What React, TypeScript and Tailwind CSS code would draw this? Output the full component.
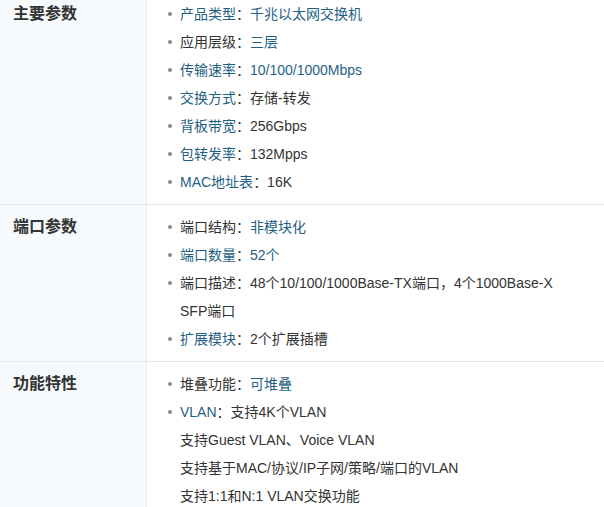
import React from "react";

type Seg = { text: string; link?: boolean };
type Line = { bullet?: boolean; segs: Seg[] };
type Group = { title: string; lines: Line[] };

const L = (text: string): Seg => ({ text, link: true });
const T = (text: string): Seg => ({ text });

const groups: Group[] = [
  {
    title: "主要参数",
    lines: [
      { bullet: true, segs: [L("产品类型"), T("："), L("千兆以太网交换机")] },
      { bullet: true, segs: [T("应用层级："), L("三层")] },
      { bullet: true, segs: [L("传输速率"), T("："), L("10/100/1000Mbps")] },
      { bullet: true, segs: [L("交换方式"), T("：存储-转发")] },
      { bullet: true, segs: [L("背板带宽"), T("：256Gbps")] },
      { bullet: true, segs: [L("包转发率"), T("：132Mpps")] },
      { bullet: true, segs: [L("MAC地址表"), T("：16K")] },
    ],
  },
  {
    title: "端口参数",
    lines: [
      { bullet: true, segs: [T("端口结构："), L("非模块化")] },
      { bullet: true, segs: [L("端口数量"), T("："), L("52个")] },
      { bullet: true, segs: [T("端口描述：48个10/100/1000Base-TX端口，4个1000Base-X")] },
      { segs: [T("SFP端口")] },
      { bullet: true, segs: [L("扩展模块"), T("：2个扩展插槽")] },
    ],
  },
  {
    title: "功能特性",
    lines: [
      { bullet: true, segs: [T("堆叠功能："), L("可堆叠")] },
      { bullet: true, segs: [L("VLAN"), T("：支持4K个VLAN")] },
      { segs: [T("支持Guest VLAN、Voice VLAN")] },
      { segs: [T("支持基于MAC/协议/IP子网/策略/端口的VLAN")] },
      { segs: [T("支持1:1和N:1 VLAN交换功能")] },
    ],
  },
];

/**
 * ONE PARAMETER ROW
 */
function ParamRow({ group }: { group: Group }) {
  return (
    <section className="flex border-b border-[#e6e6e6]">
      <div className="w-[147px] shrink-0 bg-[#f6fafd] border-r border-[#e8eef2] pl-[13px] pt-[8px]">
        <h3 className="text-[16px] leading-[28px] font-bold text-[#333]">{group.title}</h3>
      </div>
      <ul className="flex-1 pt-[8px] pb-[8px] pl-[33px]">
        {group.lines.map((line, idx) => (
          <li key={idx} className="relative text-[14px] leading-[28px] text-[#333] whitespace-nowrap">
            {line.bullet && (
              <span className="absolute left-[-12px] top-[12px] w-[4px] h-[4px] rounded-full bg-[#8a8a8a]" />
            )}
            {line.segs.map((s, i) =>
              s.link ? (
                <a key={i} href="#" className="text-[#1f5f84]">{s.text}</a>
              ) : (
                <span key={i}>{s.text}</span>
              )
            )}
          </li>
        ))}
      </ul>
    </section>
  );
}

export default function App() {
  return (
    <div
      className="w-[604px] h-[507px] overflow-hidden bg-white"
      style={{ fontFamily: '"Liberation Sans", "Noto Sans CJK SC", sans-serif' }}
    >
      <div className="-mt-[8px]">
        {groups.map((g) => (
          <ParamRow key={g.title} group={g} />
        ))}
      </div>
    </div>
  );
}
